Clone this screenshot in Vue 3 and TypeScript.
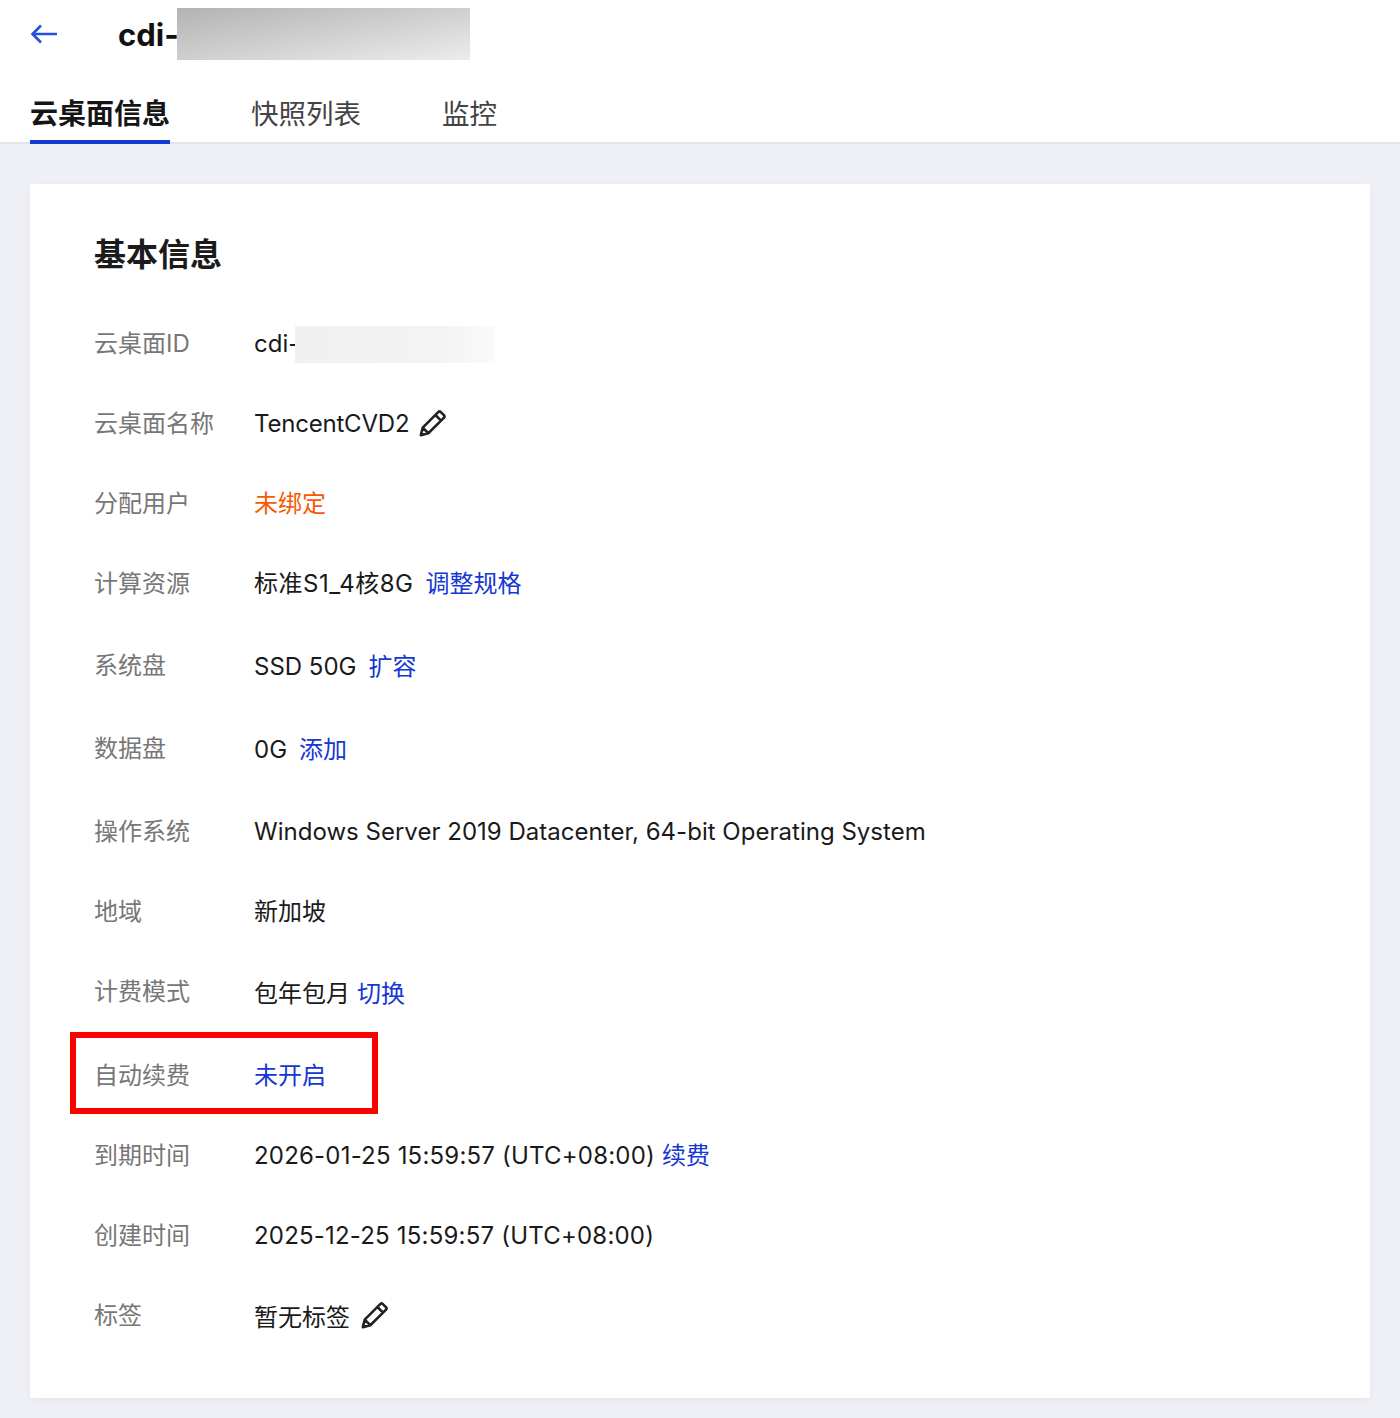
<template>
  <div class="page">
    <header class="top">
      <div class="title-bar">
        <svg class="back" width="28" height="22" viewBox="0 0 28 22" fill="none">
          <path d="M27 11H3M11 2.500L2.500 11l8.500 8.500" stroke="#2550e2" stroke-width="2.600" />
        </svg>
        <span class="title">cdi-</span>
        <span class="title-mask"></span>
      </div>
      <nav class="tabs">
        <a v-for="(tab, i) in tabs" :key="tab" class="tab" :class="{ active: i === 0 }">{{ tab }}</a>
      </nav>
    </header>

    <main class="content">
      <section class="card">
        <h2 class="card-title">基本信息</h2>
        <div class="rows">
          <div v-for="row in rows" :key="row.label" class="row" :style="{ height: row.height + 'px' }">
            <span class="label">{{ row.label }}</span>
            <div class="cell" :style="{ paddingTop: (row.nudge ?? 0) + 'px' }">
              <span class="value" :class="row.tone" :style="{ letterSpacing: (row.spacing ?? 0) + 'px' }">{{ row.value }}</span>
              <span v-if="row.mask" class="id-mask"></span>
              <a v-if="row.link" class="link" :style="{ marginLeft: (row.linkGap ?? 13) + 'px' }">{{ row.link }}</a>
              <svg
                v-if="row.edit"
                class="edit"
                :style="{ marginLeft: row.edit[0] + 'px', marginTop: row.edit[1] + 'px' }"
                width="27"
                height="27"
                viewBox="0 0 26 26"
                fill="none"
              >
                <path d="M1.800 24.200L3.600 17 16.800 3.800l2-2q1-.8 2 0l3.400 3.400q.8 1 0 2l-2 2L9 22.400 1.800 24.200zM3.600 17L9 22.400M15.800 4.800l5.400 5.400" stroke="#222" stroke-width="2.500" stroke-linejoin="round" />
              </svg>
            </div>
            <div v-if="row.highlight" class="highlight"></div>
          </div>
        </div>
      </section>
    </main>
  </div>
</template>

<script setup lang="ts">
interface Row {
  label: string
  value: string
  height: number
  tone?: string
  link?: string
  linkGap?: number
  edit?: [number, number]
  mask?: boolean
  highlight?: boolean
  nudge?: number
  spacing?: number
}

const tabs = ['云桌面信息', '快照列表', '监控']

const rows: Row[] = [
  { label: '云桌面ID', value: 'cdi-', height: 80, mask: true },
  { label: '云桌面名称', value: 'TencentCVD2', height: 80, edit: [10, 5], spacing: -0.2 },
  { label: '分配用户', value: '未绑定', height: 80, tone: 'orange' },
  { label: '计算资源', value: '标准S1_4核8G', height: 82, link: '调整规格', spacing: 0.5, linkGap: 12 },
  { label: '系统盘', value: 'SSD 50G', height: 83, link: '扩容', linkGap: 12, nudge: 1 },
  { label: '数据盘', value: '0G', height: 83, link: '添加', linkGap: 12, nudge: 1 },
  { label: '操作系统', value: 'Windows Server 2019 Datacenter, 64-bit Operating System', height: 80, spacing: 0.02 },
  { label: '地域', value: '新加坡', height: 80 },
  { label: '计费模式', value: '包年包月', height: 84, link: '切换', linkGap: 7, nudge: 2 },
  { label: '自动续费', value: '未开启', height: 80, tone: 'blue', highlight: true },
  { label: '到期时间', value: '2026-01-25 15:59:57 (UTC+08:00)', height: 80, link: '续费', linkGap: 7, spacing: 0.2 },
  { label: '创建时间', value: '2025-12-25 15:59:57 (UTC+08:00)', height: 80, spacing: 0.2 },
  { label: '标签', value: '暂无标签', height: 80, edit: [11, 3], nudge: 2 }
]
</script>

<style>
html,
body {
  background: #eff0f5;
}
</style>

<style scoped>
.page {
  width: 1400px;
  height: 1418px;
  overflow: hidden;
  background: #eff0f5;
  font-family: Inter, 'Noto Sans CJK SC', sans-serif;
}

.top {
  height: 144px;
  box-sizing: border-box;
  padding: 8px 0 0 30px;
  background: #fff;
  border-bottom: 2px solid #e2e4ee;
}

.title-bar {
  display: flex;
  align-items: center;
  height: 52px;
}

.back {
  margin-right: 60px;
}

.title {
  width: 59px;
  font-size: 31px;
  font-weight: 700;
  color: #111;
  white-space: nowrap;
}

.title-mask {
  width: 293px;
  height: 52px;
  background: linear-gradient(170deg, #b3b3b3 0%, #cfcfcf 50%, #ececec 100%);
}

.tabs {
  display: flex;
  gap: 81px;
  margin-top: 30px;
}

.tab {
  height: 54px;
  box-sizing: border-box;
  font-size: 27.500px;
  line-height: 49px;
  color: #444;
}

.tab.active {
  font-size: 28px;
  font-weight: 700;
  color: #151515;
  border-bottom: 4px solid #1537d3;
}

.content {
  padding: 40px 30px 0;
}

.card {
  height: 1214px;
  box-sizing: border-box;
  padding: 50px 64px 0;
  background: #fff;
  box-shadow: 0 2px 6px rgba(40, 50, 90, 0.06);
}

.card-title {
  margin: 0 0 49px;
  font-size: 32px;
  line-height: 42px;
  font-weight: 700;
  color: #1b1b1b;
}

.row {
  position: relative;
  display: flex;
  align-items: flex-start;
  font-size: 24px;
  line-height: 38px;
  color: #1a1a1a;
}

.label {
  width: 160px;
  flex-shrink: 0;
  color: #777;
}

.cell {
  display: flex;
  align-items: flex-start;
}

.value.orange {
  color: #f65a00;
}

.value.blue,
.link {
  color: #1537d3;
}

.id-mask {
  width: 200px;
  height: 37px;
  margin: 1px 0 0 -4px;
  background: linear-gradient(90deg, #f0f0f0 0%, #f3f3f3 70%, #fafafa 100%);
}

.highlight {
  position: absolute;
  left: -24px;
  top: -25px;
  width: 308px;
  height: 82px;
  box-sizing: border-box;
  border: 6px solid #ff0000;
}
</style>
